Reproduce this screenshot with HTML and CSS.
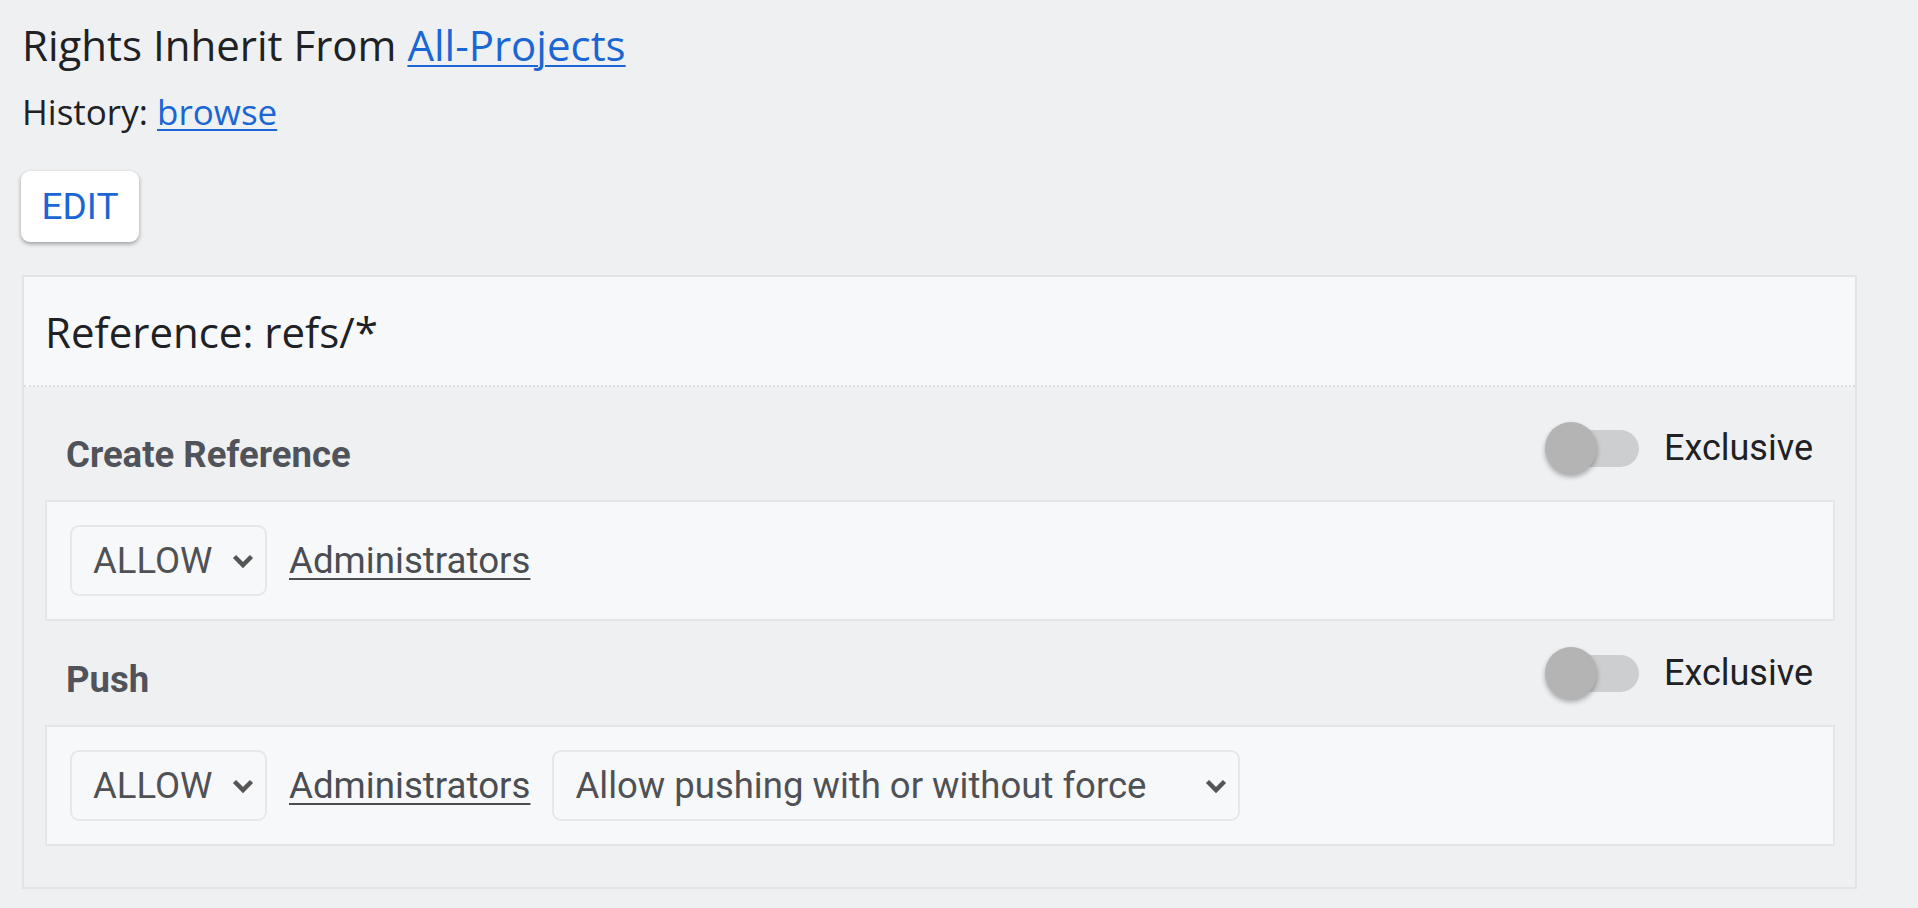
FILE: index.html
```html
<!DOCTYPE html>
<html>
<head>
<meta charset="utf-8">
<link rel="stylesheet" href="styles.css">
</head>
<body>
<main class="page">
  <h1 class="inherit">Rights Inherit From <a href="#" class="link">All-Projects</a></h1>
  <div class="history">History: <a href="#" class="link">browse</a></div>
  <div class="actions"><button class="edit-btn">EDIT</button></div>

  <section class="ref-section">
    <div class="ref-header">Reference: refs/*</div>
    <div class="ref-body">
      <div class="permission">
        <div class="perm-header">
          <span class="perm-title">Create Reference</span>
          <label class="exclusive">
            <span class="toggle"><span class="track"></span><span class="knob"></span></span>
            <span class="excl-label">Exclusive</span>
          </label>
        </div>
        <div class="rule-row">
          <div class="fake-select sel-action">
            <span class="sel-text">ALLOW</span>
            <svg class="chev" viewBox="0 0 24 24" width="24" height="24"><path d="M3.5 7.5 L12 16 L20.5 7.5" fill="none" stroke="#555555" stroke-width="4.5"/></svg>
          </div>
          <a href="#" class="group">Administrators</a>
        </div>
      </div>

      <div class="permission">
        <div class="perm-header">
          <span class="perm-title">Push</span>
          <label class="exclusive">
            <span class="toggle"><span class="track"></span><span class="knob"></span></span>
            <span class="excl-label">Exclusive</span>
          </label>
        </div>
        <div class="rule-row">
          <div class="fake-select sel-action">
            <span class="sel-text">ALLOW</span>
            <svg class="chev" viewBox="0 0 24 24" width="24" height="24"><path d="M3.5 7.5 L12 16 L20.5 7.5" fill="none" stroke="#555555" stroke-width="4.5"/></svg>
          </div>
          <a href="#" class="group">Administrators</a>
          <div class="fake-select sel-force">
            <span class="sel-text">Allow pushing with or without force</span>
            <svg class="chev" viewBox="0 0 24 24" width="24" height="24"><path d="M3.5 7.5 L12 16 L20.5 7.5" fill="none" stroke="#555555" stroke-width="4.5"/></svg>
          </div>
        </div>
      </div>
    </div>
  </section>
</main>
</body>
</html>
```
FILE: styles.css
```css
html, body {
  margin: 0;
  padding: 0;
  background: #eff0f2;
}
body {
  font-family: "Roboto", "Liberation Sans", sans-serif;
  color: #202124;
}
.page {
  padding: 17px 61px 0 22px;
}
.inherit {
  margin: 0;
  font-family: "Open Sans", "Liberation Sans", sans-serif;
  font-weight: 400;
  font-size: 42px;
  line-height: 56px;
  color: #202124;
}
.link {
  color: #1a66d4;
  text-decoration: underline;
  text-decoration-thickness: 2px;
  text-underline-offset: 4px;
}
.history {
  margin-top: 16px;
  font-family: "Open Sans", "Liberation Sans", sans-serif;
  font-size: 35px;
  line-height: 46px;
}
.actions {
  margin-top: 36px;
}
.edit-btn {
  height: 71px;
  width: 118px;
  padding: 0;
  border: none;
  border-radius: 9px;
  background: #ffffff;
  box-shadow: 0 2px 4px rgba(0, 0, 0, 0.35);
  font-family: "Roboto", sans-serif;
  font-size: 37px;
  color: #1a66d4;
  margin-left: -1px;
}
.ref-section {
  margin-top: 33px;
  border: 2px solid #e2e3e5;
  background: #eff0f2;
}
.ref-header {
  height: 108px;
  display: flex;
  align-items: center;
  padding-left: 21px;
  background: #f7f8fa;
  border-bottom: 2px dotted #dcdde0;
  font-family: "Open Sans", "Liberation Sans", sans-serif;
  font-size: 42px;
}
.ref-body {
  padding: 9px 20px 41px 21px;
}
.perm-header {
  height: 104px;
  display: flex;
  align-items: center;
  justify-content: space-between;
  padding: 0 22px 0 21px;
}
.perm-title {
  font-family: "Roboto", sans-serif;
  font-weight: 700;
  font-size: 36.5px;
  color: #50535a;
  padding-top: 12px;
}
.exclusive {
  display: flex;
  align-items: center;
  gap: 25px;
}
.toggle {
  position: relative;
  width: 94px;
  height: 52px;
  display: block;
}
.track {
  position: absolute;
  left: 1px;
  top: 8px;
  width: 93px;
  height: 37px;
  border-radius: 19px;
  background: #cdced0;
}
.knob {
  position: absolute;
  left: 0;
  top: 0;
  width: 52px;
  height: 52px;
  border-radius: 50%;
  background: #b4b4b4;
  box-shadow: 0 3px 5px rgba(0, 0, 0, 0.3);
}
.excl-label {
  font-family: "Roboto", sans-serif;
  font-size: 36px;
  color: #202124;
}
.rule-row {
  display: flex;
  align-items: center;
  gap: 22px;
  padding: 23px;
  background: #f7f8fa;
  border: 2px solid #e4e5e7;
}
.fake-select {
  height: 71px;
  box-sizing: border-box;
  display: flex;
  align-items: center;
  justify-content: space-between;
  padding: 0 10px 0 21px;
  border: 2px solid #e6e7e9;
  border-radius: 9px;
  background: #f7f8fa;
  font-family: "Roboto", sans-serif;
  font-size: 36.5px;
  color: #4f5155;
}
.sel-action {
  width: 197px;
}
.sel-force {
  width: 688px;
}
.chev {
  display: block;
}
.group {
  font-family: "Roboto", sans-serif;
  font-size: 36.7px;
  color: #4a4d52;
  text-decoration: underline;
  text-decoration-thickness: 2px;
  text-underline-offset: 5px;
}
```
